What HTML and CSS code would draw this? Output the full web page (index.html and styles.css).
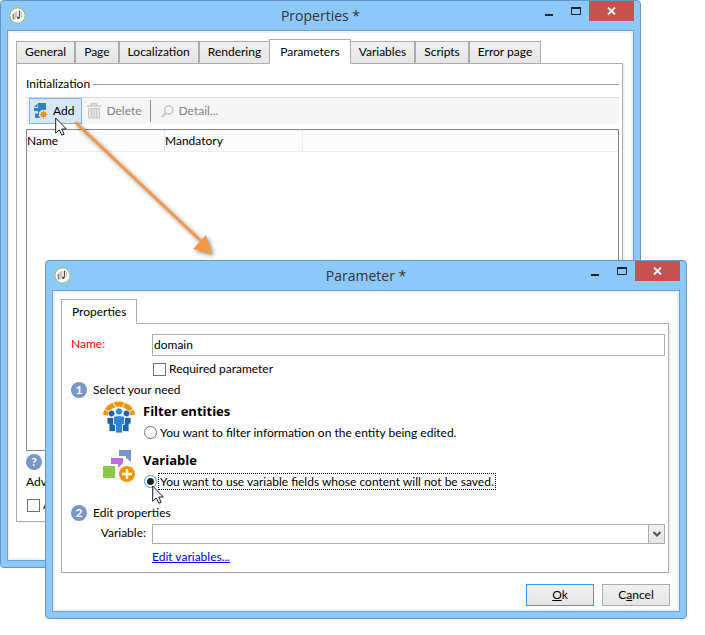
FILE: index.html
```html
<!DOCTYPE html>
<html lang="en">
<head>
<meta charset="utf-8">
<title>Properties</title>
<link rel="stylesheet" href="styles.css">
</head>
<body>
<svg class="defs" width="0" height="0" aria-hidden="true">
  <symbol id="logo" viewBox="0 0 17 17">
    <circle cx="8.500" cy="8.500" r="7.600" fill="#fff" stroke="#9bbf50" stroke-width="1"/>
    <path d="M3.500 7.500l2-1.500v7l-2-1z" fill="#8c8c8c"/>
    <path d="M5.500 5.500l3-2v7l-3 2z" fill="#c8c8c8"/>
    <path d="M10.500 3.500v6" stroke="#4a4a4a" stroke-width="1.200"/>
    <path d="M8.500 9.500h3l-1.500 2.500H8z" fill="#555"/>
    <path d="M12.500 5v5" stroke="#bbb"/>
  </symbol>
  <symbol id="cursor" viewBox="0 0 12 19">
    <path d="M.7 1v15.200l3.600-3.300 2.500 5.300 2.300-1-2.400-5.200h4.600z" fill="#fff" stroke="#1b1b2b" stroke-width="1"/>
  </symbol>
</svg>

<main class="desktop">
  <section class="window window-back" aria-label="Properties">
    <header class="titlebar">
      <svg class="logo"><use href="#logo"/></svg>
      <h1 class="title">Properties *</h1>
      <div class="controls">
        <button class="ctl" aria-label="Minimize"><svg width="10" height="10"><path d="M1 9h8" stroke="#222" stroke-width="2"/></svg></button>
        <button class="ctl" aria-label="Maximize"><svg width="10" height="10"><path d="M.5 2v6.500h9V2" fill="none" stroke="#222"/><path d="M0 2h10" stroke="#222" stroke-width="2"/></svg></button>
        <button class="ctl close" aria-label="Close"><svg width="9" height="8"><path d="M1 .5l7 7M8 .5l-7 7" stroke="#fff" stroke-width="1.800"/></svg></button>
      </div>
    </header>
    <div class="client">
      <div class="tabs" role="tablist">
        <button class="tab" role="tab">General</button>
        <button class="tab" role="tab">Page</button>
        <button class="tab" role="tab">Localization</button>
        <button class="tab" role="tab">Rendering</button>
        <button class="tab selected" role="tab" aria-selected="true">Parameters</button>
        <button class="tab" role="tab">Variables</button>
        <button class="tab" role="tab">Scripts</button>
        <button class="tab" role="tab">Error page</button>
      </div>
      <div class="panel panel-back">
        <h2 class="legend">Initialization</h2>
        <div class="toolbar">
          <button class="tool active">
            <svg width="14" height="16" viewBox="0 0 14 16"><path d="M4 0h8v8.500H7.500V11H6v4H1v-4.500h3V8H0V5h4z" fill="#2f80c8"/><path d="M0 4l3.500-3.500V4z" fill="#2f80c8"/><circle cx="9.500" cy="11.500" r="4.800" fill="#d5e6f7"/><circle cx="9.500" cy="11.500" r="2.800" fill="#f29400"/><path d="M9.500 7.500v8M5.500 11.500h8M6.700 8.700l5.600 5.600M12.300 8.700l-5.600 5.600" stroke="#f29400"/></svg>
            Add
          </button>
          <button class="tool" disabled>
            <svg width="14" height="16" viewBox="0 0 14 16"><path d="M0 3h14M4.500 3V.8h5V3" fill="none" stroke="#c9c9c9" stroke-width="1.600"/><path d="M1.500 5.500h11V15h-11z" fill="#e4e4e4" stroke="#c9c9c9"/><path d="M4.500 6v9M7 6v9M9.500 6v9" stroke="#c9c9c9"/></svg>
            Delete
          </button>
          <span class="divider"></span>
          <button class="tool detail" disabled>
            <svg width="13" height="13" viewBox="0 0 13 13"><circle cx="7.800" cy="5" r="4.100" fill="none" stroke="#c9c9c9" stroke-width="1.600"/><path d="M4.800 8L1 12" stroke="#c9c9c9" stroke-width="2.400"/></svg>
            Detail...
          </button>
        </div>
        <div class="list">
          <table class="grid">
            <thead><tr><th>Name</th><th>Mandatory</th><th></th></tr></thead>
          </table>
        </div>
        <div class="help"><span class="badge">?</span></div>
        <p class="advanced">Adv</p>
        <label class="check"><input type="checkbox" class="box">A</label>
      </div>
    </div>
  </section>

  <section class="window window-front" aria-label="Parameter">
    <header class="titlebar">
      <svg class="logo"><use href="#logo"/></svg>
      <h1 class="title">Parameter *</h1>
      <div class="controls">
        <button class="ctl" aria-label="Minimize"><svg width="10" height="10"><path d="M1 9h8" stroke="#222" stroke-width="2"/></svg></button>
        <button class="ctl" aria-label="Maximize"><svg width="10" height="10"><path d="M.5 2v6.500h9V2" fill="none" stroke="#222"/><path d="M0 2h10" stroke="#222" stroke-width="2"/></svg></button>
        <button class="ctl close" aria-label="Close"><svg width="9" height="8"><path d="M1 .5l7 7M8 .5l-7 7" stroke="#fff" stroke-width="1.800"/></svg></button>
      </div>
    </header>
    <form class="client">
      <div class="tabs" role="tablist">
        <button type="button" class="tab selected" role="tab" aria-selected="true">Properties</button>
      </div>
      <div class="panel panel-front">
        <div class="field">
          <label class="required" for="name">Name:</label>
          <input id="name" class="text" type="text" value="domain">
        </div>
        <label class="check indent"><input type="checkbox" class="box">Required parameter</label>
        <h2 class="step"><span class="badge">1</span>Select your need</h2>
        <div class="option">
          <svg width="32" height="32" viewBox="0 0 32 32"><path d="M2.300 14A14 14 0 0 1 29.700 14" fill="none" stroke="#f29400" stroke-width="5"/><path d="M9.500 1l3 5M22.500 1l-3 5M1 8l6 3M31 8l-6 3" stroke="#fff" stroke-width="1"/><g fill="#1f63a8" stroke="#fff" stroke-width=".8"><circle cx="8.500" cy="12.500" r="3.400"/><circle cx="23.500" cy="12.500" r="3.400"/><path d="M4 16.500h8.500v14H6V23H4zM19.500 16.500H28V23h-2v7.500h-6.500z"/></g><g fill="#2f87d4" stroke="#fff" stroke-width=".8"><circle cx="16" cy="10.500" r="3.600"/><path d="M10.500 15.500q5.500-2 11 0v8h-2V32h-7v-8.500h-2z"/></g></svg>
          <div class="choice">
            <h3>Filter entities</h3>
            <label class="pick"><input type="radio" name="need" class="radio"><span>You want to filter information on the entity being edited.</span></label>
          </div>
        </div>
        <div class="option second">
          <svg width="32" height="32" viewBox="0 0 32 32"><path d="M16 0h12v12l-5-4V6h-7z" fill="#7896c8"/><path d="M8 8h12v5l-5 5v-4H8z" fill="#be6fdc"/><path d="M0 16h12v12H0z" fill="#8cc84b"/><circle cx="24" cy="24" r="8.600" fill="#fff"/><circle cx="24" cy="24" r="8" fill="#f29400"/><path d="M24 19v10M19 24h10" stroke="#fff" stroke-width="2.400"/></svg>
          <div class="choice">
            <h3>Variable</h3>
            <label class="pick"><input type="radio" name="need" class="radio" checked><span>You want to use variable fields whose content will not be saved.</span></label>
          </div>
        </div>
        <h2 class="step last"><span class="badge">2</span>Edit properties</h2>
        <div class="field combo">
          <label for="variable">Variable:</label>
          <div class="picker">
            <select id="variable" class="select"><option></option></select>
            <span class="drop"><svg width="8" height="7" viewBox="0 0 8 7"><path d="M.5 1L4 4.500 7.500 1" fill="none" stroke="#555" stroke-width="2"/></svg></span>
          </div>
        </div>
        <a class="link" href="#">Edit variables...</a>
      </div>
      <div class="actions">
        <button type="button" class="push default"><span><u>O</u>k</span></button>
        <button type="button" class="push"><span>C<u>a</u>ncel</span></button>
      </div>
    </form>
  </section>

  <svg class="arrow" width="150" height="150" viewBox="0 0 150 150" aria-hidden="true"><path d="M6 7L132 126" stroke="#f79646" stroke-width="3" stroke-linecap="round"/><path d="M142 138l-19-5 13-14z" fill="#f79646"/></svg>
  <svg class="cursor cursor-add" aria-hidden="true"><use href="#cursor"/></svg>
  <svg class="cursor cursor-radio" aria-hidden="true"><use href="#cursor"/></svg>
</main>
</body>
</html>
```
FILE: styles.css
```css
* { box-sizing: border-box; }
body { margin: 0; background: #fff; color: #000; font: 12px/16px Lato, "Open Sans", sans-serif; }
button, input, select { font: inherit; color: inherit; margin: 0; padding: 0; }
h1, h2, h3, p { margin: 0; font: inherit; }
.defs { position: absolute; }
.desktop { position: relative; display: grid; align-items: start; min-width: 640px; }

.window { grid-area: 1 / 1; min-width: 0; background: #8dc8fa; border: 1px solid #6797c3; border-radius: 4px; padding: 0 6px 6px; }
.window-back { margin-right: 64px; }
.window-front { margin: 260px 18px 0 45px; }
.titlebar { display: grid; grid-template-columns: 150px 1fr 150px; height: 29px; }
.logo { width: 17px; height: 17px; margin: 6px 0 0 2px; }
.title { text-align: center; font-family: "Open Sans", sans-serif; font-size: 14px; line-height: 30px; color: #333; }
.controls { display: flex; justify-content: flex-end; align-items: flex-start; }
.ctl { width: 27px; height: 20px; border: 0; background: none; display: flex; align-items: center; justify-content: center; }
.close { width: 45px; background: #c75050; }

.client { display: block; background: #fff; border: 1px solid #6f9fcb; box-shadow: inset 0 0 0 2px #f0f0f0; padding: 8px; }
.window-back .client { padding-bottom: 38px; }
.window-front .client { padding-bottom: 5px; }
.tabs { display: flex; align-items: flex-end; margin-bottom: -1px; position: relative; }
.tab { height: 23px; padding: 0 8px 1px; border: 1px solid #acacac; background: linear-gradient(#f0f0f0, #e5e5e5); white-space: nowrap; }
.tab.selected { height: 25px; padding: 0 10px; margin: 0 -1px; background: #fff; border-bottom-color: #fff; position: relative; }
.tab.selected:first-child { margin-left: 0; }
.panel { background: #fff; border: 1px solid #acacac; box-shadow: 2px 1px 0 #f0f0f0; }
.window-back .panel { margin-right: 2px; padding: 12px 3px 8px 9px; }
.window-front .panel { margin-right: 2px; padding: 10px 3px 7px 9px; }

.legend { display: flex; align-items: center; gap: 3px; }
.legend::after { content: ""; flex: 1; height: 1px; background: #999; }
.toolbar { display: flex; align-items: center; height: 27px; margin-top: 5px; padding-left: 3px; background: #f5f5f5; border-top: 1px solid #dadada; }
.tool { display: flex; align-items: center; gap: 5px; height: 26px; padding: 0 7px 0 4px; border: 1px solid transparent; background: none; }
.tool:disabled { color: #838383; }
.tool.active { background: #d5e6f7; border-color: #7eb4ea; }
.divider { width: 1px; height: 22px; background: #8c8c8c; margin: 0 5px 0 0; }
.list { height: 322px; margin-top: 5px; border: 1px solid #828790; background: #fff; }
.grid { width: 100%; border-collapse: separate; border-spacing: 0; table-layout: fixed; background: #fcfcfc; }
.grid th { width: 138px; height: 21px; padding: 1px 0 0; line-height: 20px; text-align: left; font-weight: normal; border-right: 1px solid #e5effa; border-bottom: 1px solid #e5effa; }
.grid th:last-child { width: auto; border-right: 0; }
.help { margin-top: 3px; }
.badge { display: inline-block; flex: none; width: 16px; height: 16px; border-radius: 50%; background: #7896c8; color: #fff; text-align: center; font-weight: bold; line-height: 16px; }
.advanced { margin-top: 4px; }
.check { display: flex; align-items: center; gap: 3px; }
.window-back .check { margin-top: 7px; }
.box { appearance: none; width: 13px; height: 13px; margin-left: 1px; border: 1px solid #707070; background: #fff; }

.field { display: grid; grid-template-columns: 81px 1fr; }
.required { color: #f00; line-height: 20px; }
.text { min-width: 0; width: 100%; height: 22px; border: 1px solid #abadb3; padding: 0 1px 2px; background: #fff; }
.indent { margin: 5px 0 0 81px; }
.step { display: flex; align-items: center; gap: 6px; margin-top: 5px; }
.option { display: flex; gap: 8px; margin: 3px 0 0 32px; }
.option > svg { flex: none; }
.choice h3 { font-family: "Open Sans", sans-serif; font-size: 13px; line-height: 20px; font-weight: bold; }
.pick { display: flex; align-items: center; gap: 1px; margin-top: 3px; height: 17px; }
.pick span { line-height: 15px; padding: 0 1px; border: 1px solid transparent; }
.radio { appearance: none; width: 13px; height: 13px; border: 1px solid #707070; border-radius: 50%; margin-left: 1px; background: #fff; }
.radio:checked { border-color: #3399ff; background: radial-gradient(circle, #222 3px, #fff 4px); }
.radio:checked + span { border: 1px dotted #000; }
.second { margin-top: 9px; }
.last { margin-top: 15px; }
.combo { margin-top: 3px; }
.combo label { text-align: right; padding-right: 6px; line-height: 18px; }
.picker { display: grid; }
.select { grid-area: 1 / 1; appearance: none; min-width: 0; width: 100%; height: 20px; border: 1px solid #acacac; border-radius: 0; background: #fff; }
.drop { grid-area: 1 / 1; justify-self: end; display: flex; align-items: center; justify-content: center; width: 17px; height: 20px; border: 1px solid #acacac; background: linear-gradient(#f0f0f0, #e5e5e5); pointer-events: none; }
.link { display: block; width: fit-content; margin: 5px 0 0 81px; color: #00f; }
.actions { display: flex; justify-content: flex-end; gap: 8px; margin: 11px 1px 0 0; }
.push { width: 68px; height: 22px; border: 1px solid #acacac; background: linear-gradient(#f0f0f0, #e5e5e5); }
.default { border-color: #3399ff; }

.arrow { position: absolute; left: 70px; top: 116px; filter: drop-shadow(2px 2px 2px rgba(0, 0, 0, .45)); }
.cursor { position: absolute; width: 12px; height: 19px; }
.cursor-add { left: 55px; top: 117px; }
.cursor-radio { left: 152px; top: 485px; }
```
